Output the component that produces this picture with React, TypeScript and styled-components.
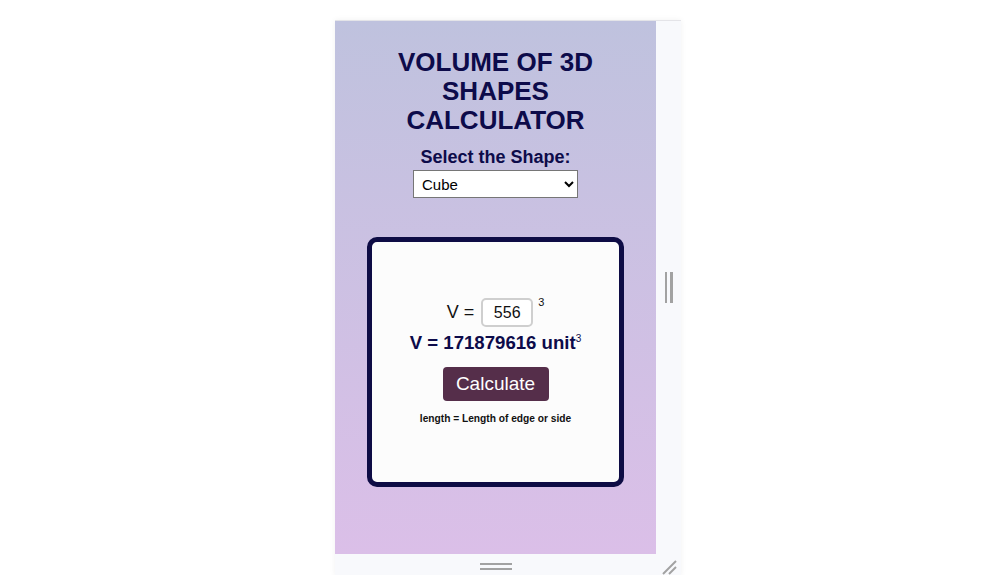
import React, { useState } from 'react';
import styled, { createGlobalStyle } from 'styled-components';

const GlobalStyle = createGlobalStyle`
  html, body {
    margin: 0;
    padding: 0;
    background: #ffffff;
    font-family: "Liberation Sans", Arial, sans-serif;
  }
`;

const StyledPage = styled.div`
  width: 997px;
  height: 575px;
  overflow: hidden;
  padding: 20px 0 0 335px;
  box-sizing: border-box;
`;

const StyledFrame = styled.div`
  display: grid;
  grid-template-columns: 321px 25px;
  grid-template-rows: 533px 22px;
  background-color: #f8f9fc;
  box-shadow: 0 0 6px rgba(0, 0, 0, 0.06);
  border-top: 1px solid #e4e4e8;
  width: max-content;
`;

const StyledViewport = styled.div`
  display: flex;
  flex-direction: column;
  align-items: center;
  background: linear-gradient(180deg, #bfc2de 0%, #dbbfe8 100%);
  padding-top: 27px;
  box-sizing: border-box;
`;

const StyledTitle = styled.h1`
  margin: 0;
  width: 240px;
  text-align: center;
  font-size: 26px;
  line-height: 29px;
  font-weight: 700;
  color: #0d0b4a;
`;

const StyledLabel = styled.label`
  margin-top: 12px;
  font-size: 18px;
  line-height: 21px;
  font-weight: 700;
  color: #0d0b4a;
`;

const StyledSelect = styled.select`
  margin-top: 2px;
  width: 165px;
  height: 28px;
  font-family: "Liberation Sans", Arial, sans-serif;
  font-size: 15px;
  color: #000;
  background: #fff;
  border: 1px solid #767676;
  border-radius: 0;
  padding: 0 4px;
`;

const StyledCard = styled.div`
  margin-top: 39px;
  width: 257px;
  height: 250px;
  box-sizing: border-box;
  border: 5px solid #0e0c45;
  border-radius: 10px;
  background-color: #fcfcfc;
  display: flex;
  flex-direction: column;
  align-items: center;
  justify-content: center;
  padding-bottom: 2px;
`;

const StyledInputRow = styled.div`
  display: flex;
  align-items: center;
  font-size: 18px;
  color: #111;
`;

const StyledInput = styled.input`
  width: 52px;
  height: 29px;
  box-sizing: border-box;
  margin-left: 7px;
  border: 2px solid #cfcfcf;
  border-radius: 5px;
  text-align: center;
  font-family: "Liberation Sans", Arial, sans-serif;
  font-size: 16px;
  color: #111;
  background: #fff;
  outline: none;
`;

const StyledSmallSup = styled.span`
  align-self: flex-start;
  margin: -2px 0 0 5px;
  font-size: 11px;
  color: #111;
`;

const StyledResult = styled.div`
  margin-top: 5px;
  font-size: 18.6px;
  line-height: 22px;
  font-weight: 700;
  color: #0d0b4a;

  sup {
    font-size: 10px;
    font-weight: 400;
    vertical-align: 7px;
    line-height: 0;
  }
`;

const StyledButton = styled.button`
  margin-top: 13px;
  width: 106px;
  height: 34px;
  border: none;
  border-radius: 4px;
  background-color: #552e4a;
  color: #fff;
  font-family: "Liberation Sans", Arial, sans-serif;
  font-size: 19px;
  cursor: pointer;
`;

const StyledNote = styled.p`
  margin: 12px 0 0;
  font-size: 10.2px;
  font-weight: 700;
  color: #111;
`;

const StyledSideHandle = styled.div`
  display: flex;
  align-items: center;
  justify-content: center;
  gap: 3px;

  span {
    width: 2.5px;
    height: 31px;
    background-color: #a2a2a2;
  }
`;

const StyledBottomHandle = styled.div`
  display: flex;
  flex-direction: column;
  align-items: center;
  justify-content: center;
  gap: 3px;
  padding-top: 3px;

  span {
    width: 32px;
    height: 2px;
    background-color: #a2a2a2;
  }
`;

const StyledCorner = styled.div`
  display: flex;
  align-items: flex-end;
  justify-content: flex-end;
  padding: 0 4px 1px 0;
`;

const App = () => {
  const [edge, setEdge] = useState('556');
  const [result, setResult] = useState(171879616);

  return (
    <StyledPage>
      <GlobalStyle />
      <StyledFrame>
        <StyledViewport>
          <StyledTitle>VOLUME OF 3D SHAPES CALCULATOR</StyledTitle>
          <StyledLabel htmlFor="shape">Select the Shape:</StyledLabel>
          <StyledSelect id="shape" defaultValue="cube">
            <option value="cube">Cube</option>
            <option value="cuboid">Cuboid</option>
            <option value="sphere">Sphere</option>
            <option value="cylinder">Cylinder</option>
            <option value="cone">Cone</option>
          </StyledSelect>
          <StyledCard>
            <StyledInputRow>
              V =
              <StyledInput value={edge} onChange={(e) => setEdge(e.target.value)} />
              <StyledSmallSup>3</StyledSmallSup>
            </StyledInputRow>
            <StyledResult>
              V = {result} unit<sup>3</sup>
            </StyledResult>
            <StyledButton onClick={() => setResult(Math.pow(Number(edge) || 0, 3))}>Calculate</StyledButton>
            <StyledNote>length = Length of edge or side</StyledNote>
          </StyledCard>
        </StyledViewport>
        <StyledSideHandle>
          <span />
          <span />
        </StyledSideHandle>
        <StyledBottomHandle>
          <span />
          <span />
        </StyledBottomHandle>
        <StyledCorner>
          <svg width="16" height="16" viewBox="0 0 16 16">
            <line x1="2" y1="15" x2="15" y2="2" stroke="#a2a2a2" strokeWidth="2" />
            <line x1="8" y1="15" x2="15" y2="8" stroke="#a2a2a2" strokeWidth="2" />
          </svg>
        </StyledCorner>
      </StyledFrame>
    </StyledPage>
  );
};

export default App;
